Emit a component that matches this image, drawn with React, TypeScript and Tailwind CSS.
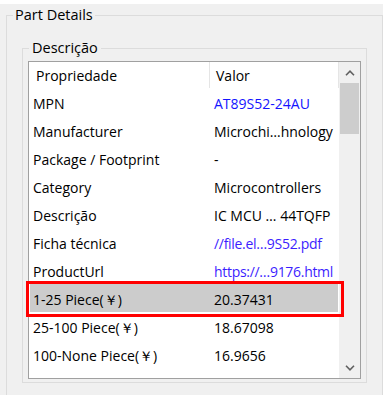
import React from 'react';

type Row = { label: string; value: string; link?: 'blue' | 'violet' };

const rows: Row[] = [
    { label: 'MPN', value: 'AT89S52-24AU', link: 'blue' },
    { label: 'Manufacturer', value: 'Microchi…hnology' },
    { label: 'Package / Footprint', value: '-' },
    { label: 'Category', value: 'Microcontrollers' },
    { label: 'Descrição', value: 'IC MCU … 44TQFP' },
    { label: 'Ficha técnica', value: '//file.el…9S52.pdf', link: 'violet' },
    { label: 'ProductUrl', value: 'https://…9176.html', link: 'violet' },
    { label: '1-25 Piece(￥)', value: '20.37431' },
    { label: '25-100 Piece(￥)', value: '18.67098' },
    { label: '100-None Piece(￥)', value: '16.9656' },
];

const SELECTED = 7;

const Chevron = ({ down }: { down?: boolean }) => (
    <svg width="10" height="6" viewBox="0 0 10 6" className={down ? 'rotate-180' : ''}>
        <path d="M1 5.2 L5 1.2 L9 5.2" fill="none" stroke="#606060" strokeWidth="1.6" />
    </svg>
);

export default function App() {
    return (
        <div
            className="w-[386px] h-[395px] bg-white overflow-hidden text-black"
            style={{ fontFamily: '"Segoe UI", "Open Sans", sans-serif' }}
        >
            <div className="mt-[4px] w-[383px] h-[391px] bg-[#f0f0f0] pl-[6px] pt-[1px] overflow-hidden">
                {/* Part Details group */}
                <fieldset className="w-[377px] h-[420px] border border-[#dcdcdc]">
                    <legend className="ml-[6px] px-[2px] text-[14.5px] leading-[20px]">Part Details</legend>

                    {/* Descrição group */}
                    <fieldset className="ml-[15px] mt-[13px] w-[345px] border border-[#dcdcdc] pb-[3px]">
                        <legend className="ml-[6px] px-[3px] text-[14.5px] leading-[20px]">Descrição</legend>

                        {/* List view */}
                        <div className="relative ml-[5px] mt-[3px] w-[333px] h-[318px] border border-[#a0a0a0] bg-white flex text-[14px]">
                            <div className="w-[310px] h-full overflow-hidden shrink-0">
                                {/* Header */}
                                <div className="flex h-[26px] items-center">
                                    <div className="w-[180px] shrink-0 pl-[7px] leading-[27px]">Propriedade</div>
                                    <div className="w-px h-[26px] shrink-0 bg-[#e5e5e5]" />
                                    <div className="w-[128px] shrink-0 pl-[6px] leading-[27px]">Valor</div>
                                    <div className="w-px h-[26px] shrink-0 bg-[#e5e5e5]" />
                                </div>

                                {rows.map((r, i) => (
                                    <div key={r.label} className="h-[28px] flex">
                                        <div
                                            className={`flex items-center h-[28px] pt-[2px] shrink-0 ${
                                                i === SELECTED ? 'ml-[1px] w-[308px] bg-[#cccccc]' : 'w-[309px]'
                                            }`}
                                        >
                                            <div
                                                className={`${
                                                    i === SELECTED ? 'w-[180px] pl-[3px]' : 'w-[181px] pl-[4px]'
                                                } shrink-0 whitespace-nowrap`}
                                            >
                                                {r.label}
                                            </div>
                                            <div
                                                className={`pl-[4px] shrink-0 whitespace-nowrap ${
                                                    r.link === 'blue'
                                                        ? 'text-[#1414ff]'
                                                        : r.link === 'violet'
                                                          ? 'text-[#3c1eff] tracking-[-0.3px]'
                                                          : ''
                                                }`}
                                            >
                                                {r.value}
                                            </div>
                                        </div>
                                    </div>
                                ))}
                            </div>

                            {/* Scrollbar */}
                            <div className="w-[21px] h-full bg-[#f0f0f0] flex flex-col">
                                <div className="h-[21px] flex items-center justify-center">
                                    <Chevron />
                                </div>
                                <div className="mx-[1px] h-[51px] bg-[#cdcdcd]" />
                                <div className="flex-1" />
                                <div className="h-[21px] flex items-center justify-center">
                                    <Chevron down />
                                </div>
                            </div>

                            {/* highlight annotation */}
                            <div className="absolute -left-[3px] top-[219px] w-[318px] h-[36px] border-[3px] border-[#ff0000]" />
                        </div>
                    </fieldset>
                </fieldset>
            </div>
        </div>
    );
}
